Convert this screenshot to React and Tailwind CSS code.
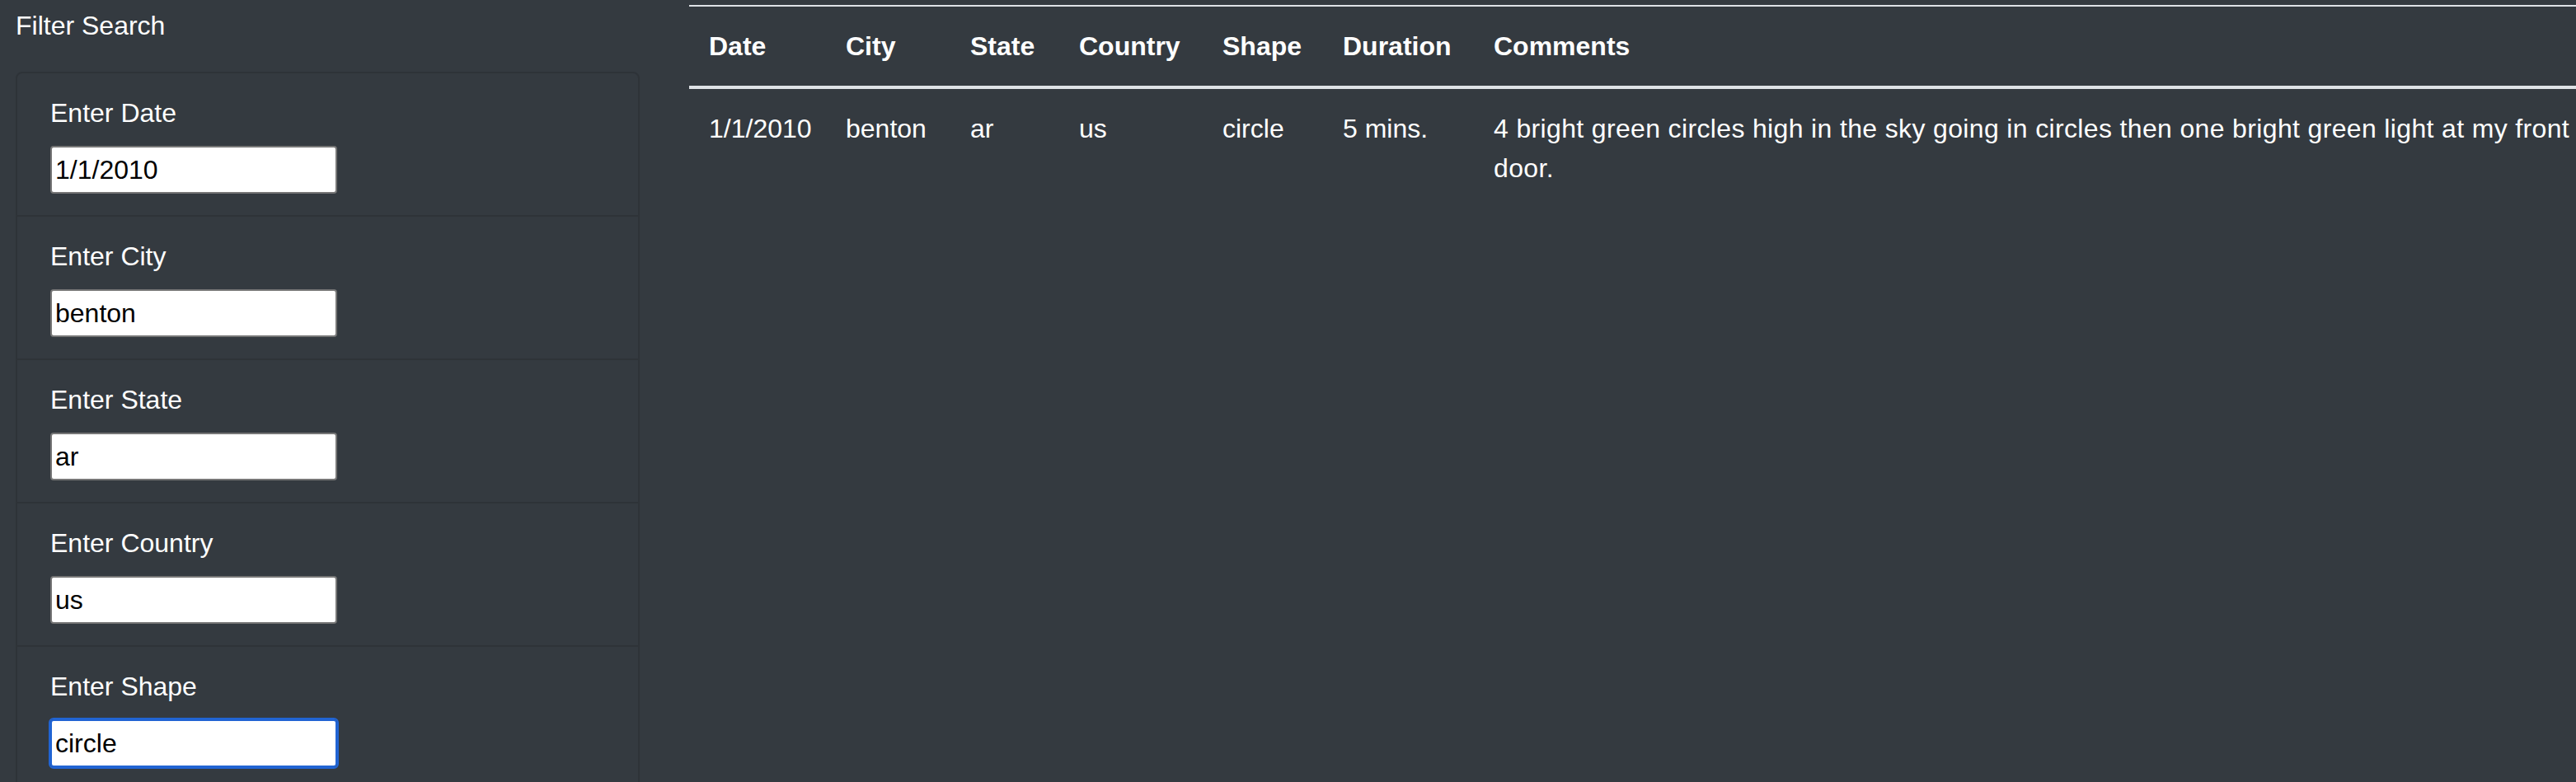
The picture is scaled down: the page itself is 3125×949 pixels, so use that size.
const filters = [
  { label: "Enter Date", value: "1/1/2010" },
  { label: "Enter City", value: "benton" },
  { label: "Enter State", value: "ar" },
  { label: "Enter Country", value: "us" },
  { label: "Enter Shape", value: "circle", focused: true },
];

const columns = [
  { name: "Date", width: "w-[166px]" },
  { name: "City", width: "w-[151px]" },
  { name: "State", width: "w-[132px]" },
  { name: "Country", width: "w-[174px]" },
  { name: "Shape", width: "w-[146px]" },
  { name: "Duration", width: "w-[183px]" },
  { name: "Comments", width: "w-[1370px]" },
];

const sightings = [
  {
    datetime: "1/1/2010",
    city: "benton",
    state: "ar",
    country: "us",
    shape: "circle",
    durationMinutes: "5 mins.",
    comments:
      "4 bright green circles high in the sky going in circles then one bright green light at my front door.",
  },
];

const FilterItem = ({ label, value, focused }) => (
  <li className="px-[40px] py-[24px]">
    <label className="block h-[48px] mb-[16px]">{label}</label>
    <div className="h-[60px]">
      <input
        type="text"
        defaultValue={value}
        className={`w-[348px] h-[58px] px-[4px] bg-white text-black text-[32px] rounded-[4px] border-2 ${
          focused
            ? "border-[#2164d3] outline-2 outline-[#2164d3]"
            : "border-[#767676] outline-none"
        }`}
      />
    </div>
  </li>
);

export default function App() {
  return (
    <div className="h-screen w-screen overflow-hidden bg-[#343a40] text-white font-['Liberation_Sans',Arial,sans-serif] text-[32px] leading-[48px]">
      <div className="flex items-start">
        {/* Sidebar filters */}
        <aside className="ml-[19px] w-[757px] shrink-0 pt-[7px]">
          <div className="h-[48px]">Filter Search</div>
          <ul className="mt-[32px] rounded-[8px] border-2 border-[#2e3338] divide-y-2 divide-[#2e3338]">
            {filters.map((f) => (
              <FilterItem key={f.label} {...f} />
            ))}
          </ul>
        </aside>

        {/* Results table */}
        <div className="ml-[60px] mt-[6px] shrink-0">
          <table className="table-fixed border-collapse w-[2322px] text-left">
            <colgroup>
              {columns.map((c) => (
                <col key={c.name} className={c.width} />
              ))}
            </colgroup>
            <thead>
              <tr>
                {columns.map((c) => (
                  <th
                    key={c.name}
                    className="px-[24px] py-[24px] font-bold border-t-2 border-b-4 border-[#dee2e6] align-bottom"
                  >
                    {c.name}
                  </th>
                ))}
              </tr>
            </thead>
            <tbody>
              {sightings.map((s, i) => (
                <tr key={i}>
                  <td className="px-[24px] py-[24px] align-top">{s.datetime}</td>
                  <td className="px-[24px] py-[24px] align-top">{s.city}</td>
                  <td className="px-[24px] py-[24px] align-top">{s.state}</td>
                  <td className="px-[24px] py-[24px] align-top">{s.country}</td>
                  <td className="px-[24px] py-[24px] align-top">{s.shape}</td>
                  <td className="px-[24px] py-[24px] align-top">{s.durationMinutes}</td>
                  <td className="px-[24px] py-[24px] align-top tracking-[0.35px]">{s.comments}</td>
                </tr>
              ))}
            </tbody>
          </table>
        </div>
      </div>
    </div>
  );
}
